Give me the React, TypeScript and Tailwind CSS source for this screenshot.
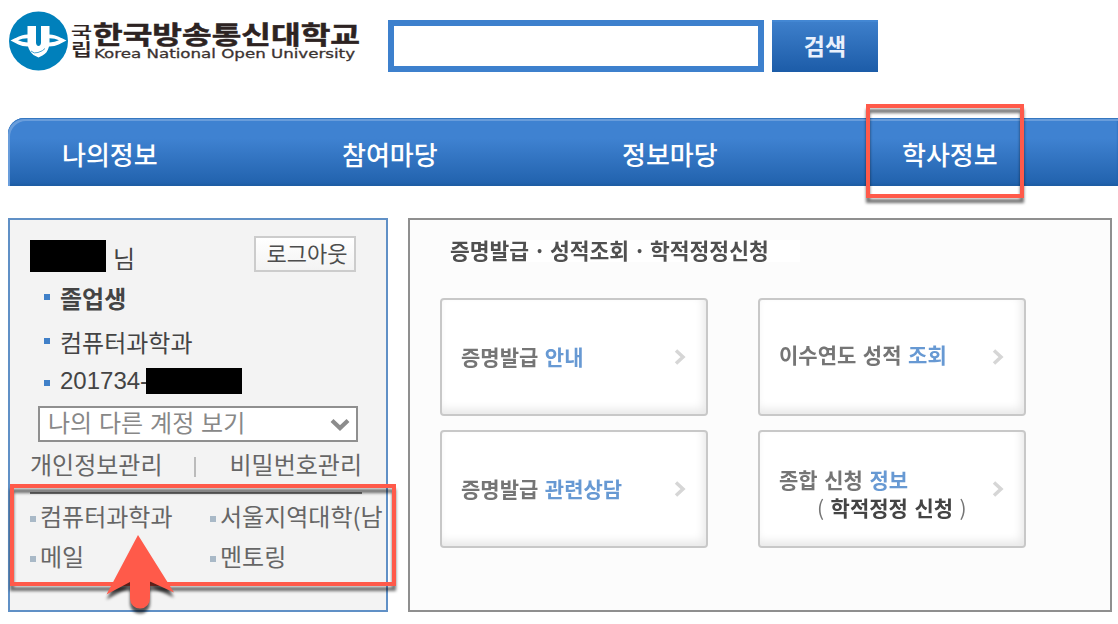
import { ReactNode } from "react";
import clsx from "clsx";

interface Service {
  id: number;
  label: string;
  accent: string;
  note?: string;
  className: string;
}

const menus = ["나의정보", "참여마당", "정보마당", "학사정보"];

const services: Service[] = [
  { id: 1, label: "증명발급", accent: "안내", className: "pb-0.5" },
  { id: 2, label: "이수연도 성적", accent: "조회", className: "pb-1.5" },
  { id: 3, label: "증명발급", accent: "관련상담", className: "pb-0.5" },
  {
    id: 4,
    label: "종합 신청",
    accent: "정보",
    note: "학적정정 신청",
    className: "pt-2",
  },
];

const links = ["컴퓨터과학과", "서울지역대학(남", "메일", "멘토링"];

const Logo = () => (
  <svg width="360" height="76" viewBox="0 0 360 76" className="shrink-0">
    <circle cx="38.5" cy="41" r="29.5" fill="#0080bb" />
    <path
      d="M10.500 40.500 C16 38 20 35 27.500 34.500 V26 H36 V43 Q36.500 46 38.500 46 Q40.500 46 41 43 V26 H49.500 V34.500 C57 35 61 38 66.500 40.500 C61 43 57 46.500 49 46.500 C48 51 45.500 54 42.500 55.500 L38.500 57.500 L33.500 55 C31 53 29 50 28 46.500 C20 46.500 16 43 10.500 40.500 Z"
      fill="#fff"
    />
    <path
      d="M27.500 38.300 Q22 38.500 18 40.300 Q22 42.300 27.500 42.500 Z M49.500 38.300 Q55 38.500 59 40.300 Q55 42.300 49.500 42.500 Z"
      fill="#0080bb"
    />
    <path
      d="M31 51 Q34 54 38 52.500 Q43 51 45 48.500"
      fill="none"
      stroke="#4aa5d0"
      strokeWidth="1"
    />
    <g fill="#2d2322" stroke="#2d2322" fontFamily="'Noto Sans CJK KR', sans-serif">
      <text x="71" y="37.500" fontSize="15.500" fontWeight="500" strokeWidth="0.200" textLength="21" lengthAdjust="spacingAndGlyphs">
        국
      </text>
      <text x="71" y="56" fontSize="17" fontWeight="500" strokeWidth="0.200" textLength="21" lengthAdjust="spacingAndGlyphs">
        립
      </text>
      <text x="93" y="43.500" fontSize="25" fontWeight="700" strokeWidth="0.500" textLength="267" lengthAdjust="spacingAndGlyphs">
        한국방송통신대학교
      </text>
    </g>
    <text
      x="94"
      y="58"
      fontSize="12.500"
      fill="#3b3231"
      stroke="#3b3231"
      strokeWidth="0.300"
      fontFamily="'DejaVu Sans', sans-serif"
      textLength="261"
      lengthAdjust="spacingAndGlyphs"
    >
      Korea National Open University
    </text>
  </svg>
);

const InfoRow = ({ children, className }: { children: ReactNode; className: string }) => (
  <li className={clsx("flex items-center pl-[34px]", className)}>
    <span className="size-1.5 shrink-0 bg-[#4080c8]" />
    {children}
  </li>
);

const ServiceCard = ({ service }: { service: Service }) => (
  <a className="flex h-[118px] items-center justify-between rounded-[4px] border-2 border-[#c8c8c8] bg-white px-[19px] shadow-[inset_-3px_-5px_9px_rgba(0,0,0,0.09)]">
    <div
      className={clsx(
        "text-[21px] leading-7 font-bold [word-spacing:1.8px] whitespace-nowrap text-[#757575] blur-[0.6px]",
        service.className,
      )}
    >
      {service.label} <span className="text-[#6799d3]">{service.accent}</span>
      {service.note && (
        <div className="pl-[38px]">
          <span className="font-normal">( </span>
          <span className="text-[#444]">{service.note}</span>
          <span className="font-normal"> )</span>
        </div>
      )}
    </div>
    <svg width="12" height="16" viewBox="0 0 12 16" className="mr-px shrink-0 blur-[0.4px]">
      <path d="M2 1.500 L9 8 L2 14.500" fill="none" stroke="#d6d6d6" strokeWidth="3.500" />
    </svg>
  </a>
);

const App = () => {
  return (
    <div className="relative h-[624px] w-[1118px] overflow-hidden bg-white font-['Noto_Sans_CJK_KR',sans-serif]">
      <header className="flex h-[118px] items-start">
        <Logo />
        <input className="mt-5 ml-7 h-[52px] w-[376px] border-6 border-[#3d80cd] bg-white px-2" />
        <button className="mt-5 ml-2 h-[52px] w-[106px] border-t-2 border-[#4387d3] bg-linear-to-b from-[#3d7fcb] to-[#1c5ca8] pb-1 text-[23px] leading-8 font-bold text-[#eaf1fc]">
          검색
        </button>
      </header>

      <nav className="ml-2 flex h-[68px] rounded-tl-[16px] bg-linear-to-b from-[#3f82d1] from-30% to-[#2061ac] pl-[54px] shadow-[inset_0_1px_0_#3577c0,inset_2px_3px_0_#699ddb,inset_0_-2px_2px_#1f5da5]">
        {menus.map((menu) => (
          <a
            key={menu}
            className="w-[280px] shrink-0 pt-[3px] text-[26px] leading-[66px] font-medium text-white"
          >
            {menu}
          </a>
        ))}
      </nav>

      <main className="mt-8 flex gap-5 pl-2">
        <aside className="h-[394px] w-[380px] border-2 border-[#6090c6] bg-[#f3f3f3] pt-4 text-[24px] leading-none text-[#444]">
          <div className="flex h-9 items-end pl-5">
            <span className="h-8 w-[76px] bg-black" />
            <span className="pb-0.5 pl-[7px]">님</span>
            <button className="mr-[30px] ml-auto h-9 w-[102px] border-2 border-[#ccc] bg-linear-to-b from-white to-[#f3f3f3] pb-1.5 pl-1 text-[22px] leading-7 text-[#4d4d4d]">
              로그아웃
            </button>
          </div>
          <ul>
            <InfoRow className="mt-[3px] h-11">
              <b className="pt-0.5 pl-2.5">졸업생</b>
            </InfoRow>
            <InfoRow className="h-11">
              <span className="pt-0.5 pl-2.5">컴퓨터과학과</span>
            </InfoRow>
            <InfoRow className="h-10">
              <span className="pb-1 pl-2.5 font-['Liberation_Sans',sans-serif]">201734-</span>
              <span className="mb-1 -ml-0.5 h-[26px] w-24 bg-black" />
            </InfoRow>
          </ul>
          <div className="mt-[3px] ml-7 flex h-9 w-80 items-center justify-between border-2 border-[#8f8f8f] bg-white pr-[6px] pb-1 pl-2 [word-spacing:1.5px] text-[#888]">
            나의 다른 계정 보기
            <svg width="20" height="14" viewBox="0 0 20 14" className="mt-1.5">
              <path d="M2 2.500 L10 10 L18 2.500" fill="none" stroke="#8c8c8c" strokeWidth="4.200" />
            </svg>
          </div>
          <div className="ml-5 flex h-[52px] w-[332px] items-center justify-between border-b-2 border-[#777] pb-1.5 text-[#666]">
            <span>개인정보관리</span>
            <span className="mt-1.5 mr-0.5 h-5 w-0.5 bg-[#bbb]" />
            <span>비밀번호관리</span>
          </div>
          <div className="mt-0.5 grid grid-cols-[180px_1fr] pl-5 whitespace-nowrap text-[#666]">
            {links.map((link) => (
              <a key={link} className="flex h-10 items-center gap-1">
                <span className="mt-1.5 size-1.5 shrink-0 bg-[#a9b9c7]" />
                {link}
              </a>
            ))}
          </div>
        </aside>

        <section className="h-[394px] w-[704px] border-2 border-[#8f8f8f] bg-[#fcfcfc] pt-5 pl-[30px]">
          <h2 className="ml-2.5 h-[22px] w-[350px] bg-white text-[21.5px] leading-[19px] font-bold whitespace-nowrap text-[#505050] blur-[0.5px] [word-spacing:-0.8px]">
            증명발급 · 성적조회 · 학적정정신청
          </h2>
          <div className="mt-9 grid grid-cols-[268px_268px] gap-x-[50px] gap-y-3.5">
            {services.map((service) => (
              <ServiceCard key={service.id} service={service} />
            ))}
          </div>
        </section>
      </main>

      {/* callouts drawn over the page */}
      <div className="absolute top-[104px] left-[866px] h-[94px] w-[158px] border-4 border-[#ff5a4a] drop-shadow-[0_5px_1.5px_rgba(0,0,0,0.55)]" />
      <div className="absolute top-[484px] left-[10px] h-[102px] w-[386px] border-4 border-[#ff5a4a] drop-shadow-[0_5px_1.5px_rgba(0,0,0,0.55)]" />
      <svg
        width="80"
        height="89"
        viewBox="100 535 80 89"
        className="absolute top-[535px] left-[100px] drop-shadow-[0_5px_1.5px_rgba(0,0,0,0.65)]"
      >
        <path
          d="M138 535 L174 592.500 L150 581.500 V598 A10 10 0 0 1 130 599 V582 L106.500 594.500 Z"
          fill="#ff5a4a"
        />
      </svg>
    </div>
  );
};

export default App;
